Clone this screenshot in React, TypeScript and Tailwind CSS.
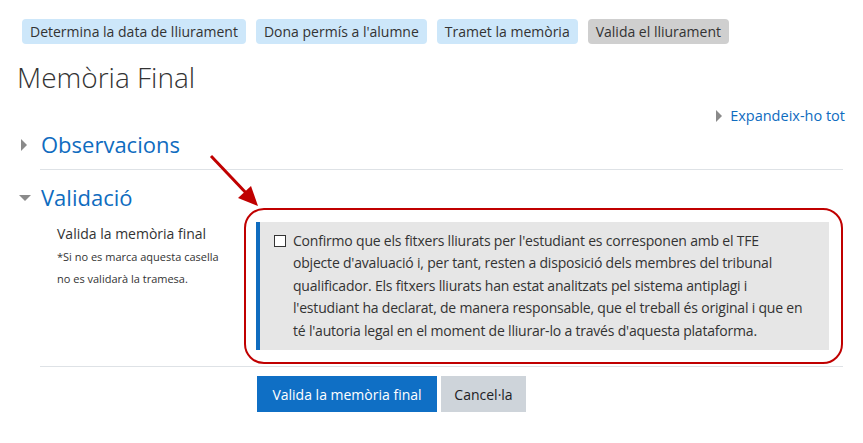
import { ReactNode } from "react";

const font = { fontFamily: '"Open Sans", "Noto Sans", sans-serif' };

function Tag({ children, done = false }: { children: ReactNode; done?: boolean }) {
  return (
    <span
      className={`flex h-[25px] items-center rounded-[4px] px-[8px] text-[14px] text-[#333] ${
        done ? "bg-[#cfcfcf]" : "bg-[#cde7fa]"
      }`}
    >
      {children}
    </span>
  );
}

function Caret({ open = false }: { open?: boolean }) {
  return open ? (
    <span className="h-0 w-0 border-x-[6px] border-t-[6px] border-x-transparent border-t-[#8a8a8a]" />
  ) : (
    <span className="h-0 w-0 border-y-[6px] border-l-[6px] border-y-transparent border-l-[#8a8a8a]" />
  );
}

export default function App() {
  return (
    <div className="relative h-[443px] w-[863px] overflow-hidden bg-white" style={font}>
      <div className="flex gap-[10px] pl-[22px] pt-[19px]">
        <Tag>Determina la data de lliurament</Tag>
        <Tag>Dona permís a l'alumne</Tag>
        <Tag>Tramet la memòria</Tag>
        <Tag done>Valida el lliurament</Tag>
      </div>

      <h2 className="mt-[16px] pl-[17px] text-[28px] font-light leading-[34px] text-[#333]">
        Memòria Final
      </h2>

      <div className="mt-[11px] flex items-center justify-end gap-[8px] pr-[18px] text-[14.5px] text-[#0f6cbf]">
        <Caret />
        <span>Expandeix-ho tot</span>
      </div>

      <div className="mt-[2px] flex h-[32px] items-center gap-[14px] pl-[21px]">
        <Caret />
        <span className="text-[22px] text-[#0f6cbf]">Observacions</span>
      </div>

      <div className="ml-[40px] mr-[20px] mt-[8px] border-t border-[#dee2e6]" />

      <div className="mt-[12px] flex h-[32px] items-center gap-[10px] pl-[19px]">
        <Caret open />
        <span className="text-[22px] text-[#0f6cbf]">Validació</span>
      </div>

      <div className="ml-[40px] mr-[20px] mt-[8px]">
        <div className="flex">
          <div className="w-[216px] pl-[17px] pt-[1px]">
            <p className="text-[14px] leading-[22px] text-[#333]">Valida la memòria final</p>
            <p className="mt-[1px] text-[11px] leading-[22px] text-[#333]">
              *Si no es marca aquesta casella
              <br />
              no es validarà la tramesa.
            </p>
          </div>
          <div className="flex w-[573px] gap-[7px] border-l-4 border-[#0f6cbf] bg-[#e6e6e6] py-[8px] pl-[14px] text-[14px] leading-[22.5px] text-[#333]">
            <span className="mt-[5px] h-[12px] w-[12px] shrink-0 border border-[#333] bg-white" />
            <p className="tracking-[-0.2px]">
              Confirmo que els fitxers lliurats per l'estudiant es corresponen amb el TFE
              <br />
              objecte d'avaluació i, per tant, resten a disposició dels membres del tribunal
              <br />
              qualificador. Els fitxers lliurats han estat analitzats pel sistema antiplagi i
              <br />
              l'estudiant ha declarat, de manera responsable, que el treball és original i que en
              <br />
              té l'autoria legal en el moment de lliurar-lo a través d'aquesta plataforma.
            </p>
          </div>
        </div>

        <div className="mt-[16px] border-t border-[#dee2e6]" />

        <div className="mt-[9px] flex gap-[4px] pl-[217px]">
          <button className="h-[36px] w-[180px] bg-[#0f6fc5] text-[14px] text-white">
            Valida la memòria final
          </button>
          <button className="h-[36px] w-[85px] bg-[#ced4da] text-[14px] text-[#1d2125]">
            Cancel·la
          </button>
        </div>
      </div>

      {/* red annotation */}
      <div className="absolute left-[244px] top-[208px] h-[156px] w-[599px] rounded-[20px] border-2 border-[#c00000]" />
      <svg className="absolute left-[200px] top-[150px]" width="70" height="65" viewBox="0 0 70 65">
        <line x1="11" y1="6" x2="48" y2="45" stroke="#c00000" strokeWidth="3" />
        <polygon points="58,56 38,48 51,36" fill="#c00000" />
      </svg>
    </div>
  );
}
